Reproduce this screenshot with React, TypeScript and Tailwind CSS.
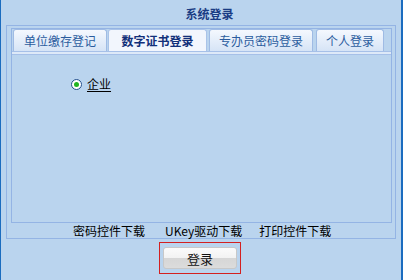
import React from "react";

const font = { fontFamily: '"Noto Sans CJK SC", "Liberation Sans", sans-serif' };

function Tab({ label, width, active }: { label: string; width: string; active?: boolean }) {
  return (
    <div
      className={`${width} h-[22px] flex items-center justify-center rounded-t-[3px] border border-b-0 text-[12px] leading-none ${
        active
          ? "bg-[#f2f6fd] border-[#a9c3e8] text-[#12307a] font-bold"
          : "bg-gradient-to-b from-[#f4f8fe] to-[#d6e4f6] border-[#9fbbe4] text-[#2b5c9e]"
      }`}
    >
      {label}
    </div>
  );
}

export default function App() {
  return (
    <div
      className="w-[403px] h-[280px] bg-[#bad4ee] border-l border-r-2 border-[#1b6cbf] flex flex-col"
      style={font}
    >
      {/* title */}
      <div className="h-[25px] flex items-center justify-center pl-[17px] pt-[3px] text-[12px] font-bold text-[#1a3c84]">
        系统登录
      </div>

      {/* outer panel */}
      <div className="ml-[5px] w-[390px] h-[214px] border border-[#94b4e4] flex flex-col">
        {/* inner panel */}
        <div className="ml-[4px] mt-[2px] w-[381px] h-[196px] border border-[#94b4e4] flex flex-col">
          <div className="flex items-end pl-[1px] h-[22px]">
            <Tab label="单位缴存登记" width="w-[94px]" />
            <div className="w-[1px]" />
            <Tab label="数字证书登录" width="w-[99px]" active />
            <div className="w-[2px]" />
            <Tab label="专办员密码登录" width="w-[104px]" />
            <div className="w-[3px]" />
            <Tab label="个人登录" width="w-[68px]" />
          </div>
          <div className="h-[4px] bg-[#dde9f8] border-t border-b border-[#a6c0e8]" />

          {/* radio */}
          <div className="flex items-center mt-[23px] ml-[59px]">
            <div className="w-[11px] h-[11px] rounded-full border border-[#24508e] bg-white flex items-center justify-center">
              <div className="w-[5px] h-[5px] rounded-full bg-[#22b422]" />
            </div>
            <span className="ml-[5px] text-[12px] leading-none text-black underline underline-offset-2">企业</span>
          </div>
        </div>

        {/* downloads */}
        <div className="flex items-center h-[15px] text-[12px] leading-none text-black">
          <span className="ml-[66px]">密码控件下载</span>
          <span className="ml-[20px]">UKey驱动下载</span>
          <span className="ml-[17px]">打印控件下载</span>
        </div>
      </div>

      {/* login button */}
      <div className="ml-[158px] mt-[3px] w-[82px] h-[32px] border border-[#d42020] flex items-center justify-center">
        <div className="w-[74px] h-[22px] rounded-[3px] border border-[#c8c8c8] bg-[linear-gradient(to_bottom,#fbfbfb_0%,#f2f2f2_50%,#d6d6d6_52%,#dcdcdc_100%)] flex items-center justify-center text-[13px] leading-none text-[#111]">
          登录
        </div>
      </div>
    </div>
  );
}
